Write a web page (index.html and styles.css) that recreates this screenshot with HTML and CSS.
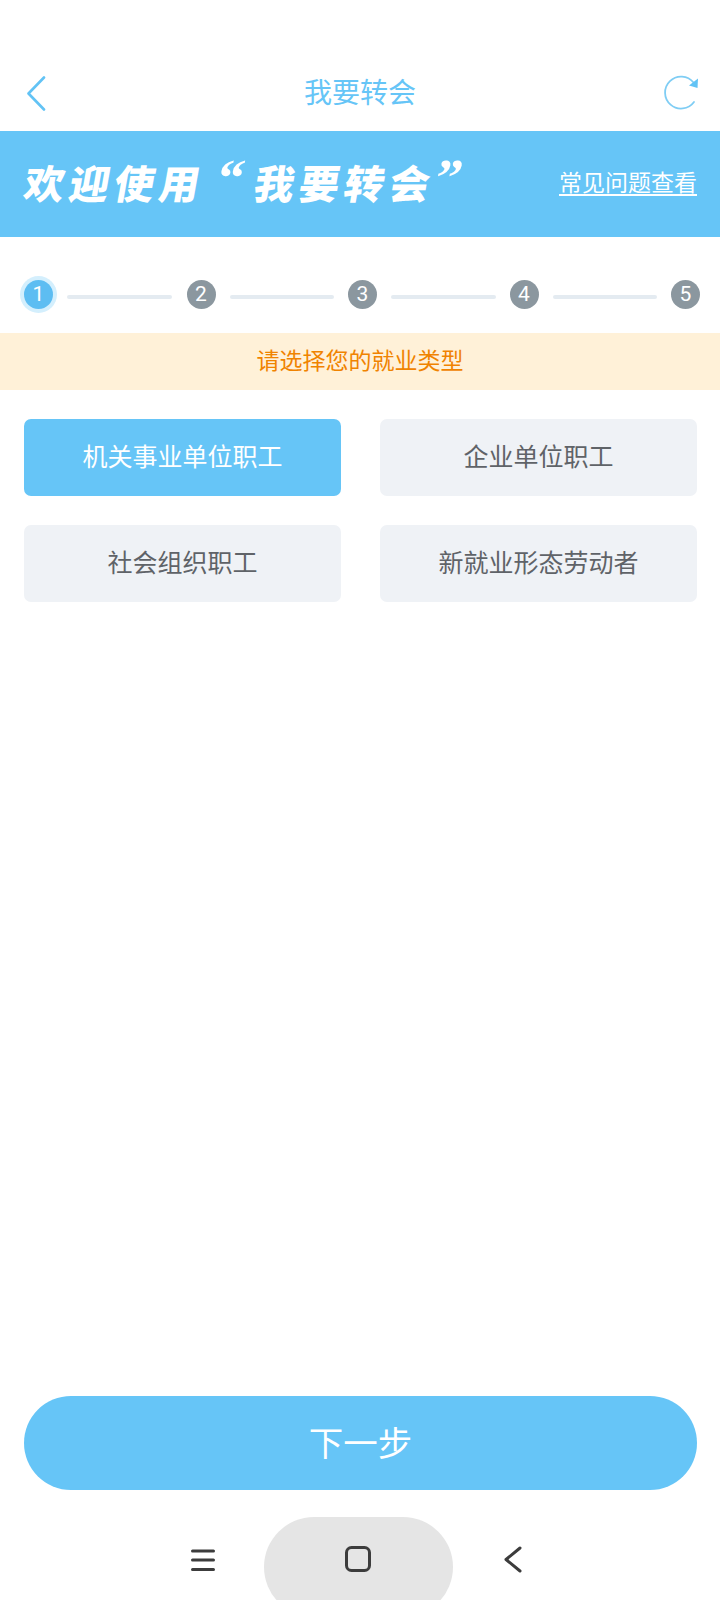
FILE: index.html
```html
<!DOCTYPE html>
<html lang="zh-CN">
<head>
  <meta charset="UTF-8" />
  <title>我要转会</title>
  <link rel="stylesheet" href="styles.css">
</head>
<body>

<div class="page">
  <header class="topbar">
    <svg class="icon-back" width="20" height="35" viewBox="0 0 20 35">
      <path d="M18 1.5 L2.5 17.5 L18 33.5" fill="none" stroke="#62c3f5" stroke-width="2.6" stroke-linecap="round" stroke-linejoin="round"/>
    </svg>
    <h1 class="title">我要转会</h1>
    <svg class="icon-refresh" width="36" height="36" viewBox="0 0 36 36">
      <path d="M30.5 7.5 A16 16 0 1 0 31 27" fill="none" stroke="#7fcdf4" stroke-width="1.8" stroke-linecap="round"/>
      <path d="M35 3.5 L34.5 13 L26 10.5 Z" fill="#62c3f5"/>
    </svg>
  </header>

  <section class="banner">
    <div class="banner-text">欢迎使用<span class="quote">“</span>我要转会<span class="quote close">”</span></div>
    <a class="banner-link" href="#">常见问题查看</a>
  </section>

  <div class="steps">
    <span class="step active">1</span><i class="line"></i>
    <span class="step">2</span><i class="line"></i>
    <span class="step">3</span><i class="line"></i>
    <span class="step">4</span><i class="line"></i>
    <span class="step">5</span>
  </div>

  <div class="notice">请选择您的就业类型</div>

  <div class="options">
    <button class="option selected">机关事业单位职工</button>
    <button class="option">企业单位职工</button>
    <button class="option">社会组织职工</button>
    <button class="option">新就业形态劳动者</button>
  </div>

  <div class="footer">
    <button class="next">下一步</button>
  </div>

  <nav class="sysnav">
    <svg width="24" height="22" viewBox="0 0 24 22">
      <path d="M1.5 2 H22.5 M1.5 11 H22.5 M1.5 20.5 H22.5" stroke="#3c3c3c" stroke-width="3" stroke-linecap="round"/>
    </svg>
    <div class="home">
      <svg width="26" height="26" viewBox="0 0 26 26">
        <rect x="1.5" y="1.5" width="23" height="23" rx="5" fill="none" stroke="#3c3c3c" stroke-width="3"/>
      </svg>
    </div>
    <svg width="18" height="27" viewBox="0 0 18 27">
      <path d="M16 2 L2 13.5 L16 25" fill="none" stroke="#3c3c3c" stroke-width="3" stroke-linecap="round" stroke-linejoin="round"/>
    </svg>
  </nav>
</div>

</body>
</html>
```

FILE: styles.css
```css
* {
  box-sizing: border-box;
}

html, body {
  margin: 0;
  padding: 0;
}

body {
  font-family: Roboto, "Noto Sans CJK SC", sans-serif;
  background-color: #ffffff;
}

.page {
  display: flex;
  flex-direction: column;
  width: 720px;
  height: 1600px;
  overflow: hidden;
}

.topbar {
  display: flex;
  align-items: center;
  justify-content: space-between;
  height: 131px;
  padding: 55px 21px 0 26px;
  position: relative;
}

.title {
  position: absolute;
  left: 0;
  right: 0;
  top: 74px;
  margin: 0;
  text-align: center;
  font-size: 28px;
  line-height: 40px;
  font-weight: 400;
  color: #66c5f7;
}

.banner {
  display: flex;
  align-items: center;
  justify-content: space-between;
  height: 106px;
  padding: 0 23px 0 25px;
  background-color: #66c5f7;
  color: #ffffff;
}

.banner-text {
  display: flex;
  align-items: center;
  margin-bottom: 4px;
  font-family: "Noto Sans CJK SC", sans-serif;
  font-size: 40px;
  font-weight: 900;
  letter-spacing: 5px;
  line-height: 50px;
  transform: skewX(-10deg);
}

.quote {
  width: 50px;
  height: 50px;
  margin-top: -8px;
  font-family: "Liberation Serif", serif;
  font-size: 52px;
  font-weight: 700;
  letter-spacing: 0;
  line-height: 50px;
  text-align: center;
}

.quote.close {
  width: 26px;
}

.banner-link {
  margin-bottom: 6px;
  color: #ffffff;
  font-size: 23px;
  text-decoration: underline;
  text-underline-offset: 3px;
}

.steps {
  display: flex;
  align-items: center;
  gap: 14px;
  padding: 43px 20px 24px 24px;
}

.step {
  flex: none;
  width: 29px;
  height: 29px;
  border-radius: 50%;
  background-color: #8b979f;
  color: #ffffff;
  font-size: 21px;
  line-height: 29px;
  text-align: center;
}

.step.active {
  background-color: #5dbdf2;
  box-shadow: 0 0 0 4px #d4effd;
}

.step.active + .line {
  margin-right: 1px;
}

.line {
  flex: 1;
  height: 4px;
  margin-top: 4px;
  border-radius: 2px;
  background-color: #e4ebf1;
}

.notice {
  height: 57px;
  background-color: #fff1d8;
  color: #f08300;
  font-size: 23px;
  line-height: 57px;
  text-align: center;
}

.options {
  display: grid;
  grid-template-columns: 317px 317px;
  grid-auto-rows: 77px;
  column-gap: 39px;
  row-gap: 29px;
  padding: 29px 24px 0;
}

.option {
  padding: 0 0 5px;
  border: none;
  border-radius: 7px;
  background-color: #eff2f6;
  color: #5f6368;
  font-family: inherit;
  font-size: 25px;
}

.option.selected {
  background-color: #66c5f7;
  color: #ffffff;
}

.footer {
  margin-top: auto;
  padding: 0 23px 0 24px;
}

.next {
  width: 100%;
  height: 94px;
  padding: 0 0 5px;
  border: none;
  border-radius: 47px;
  background-color: #66c5f7;
  color: #ffffff;
  font-family: inherit;
  font-size: 34.5px;
}

.sysnav {
  display: flex;
  align-items: flex-start;
  flex: none;
  height: 110px;
  padding: 27px 0 0 191px;
}

.sysnav > svg {
  flex: none;
  margin-top: 29px;
}

.sysnav > svg:first-child {
  margin-top: 32px;
}

.home {
  display: flex;
  justify-content: center;
  flex: none;
  width: 189px;
  height: 100px;
  margin: 0 51px 0 49px;
  padding: 29px 2px 0 0;
  border-radius: 50px;
  background-color: #e5e5e5;
}
```
